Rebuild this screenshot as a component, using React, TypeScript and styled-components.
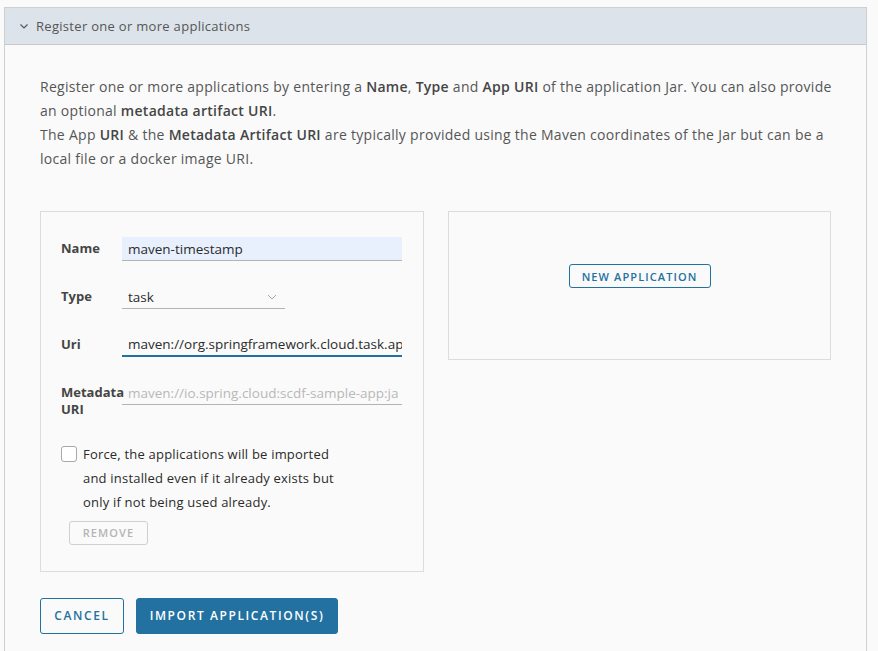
import React from "react";
import styled, { createGlobalStyle } from "styled-components";

const Global = createGlobalStyle`
  html, body { margin: 0; padding: 0; background: #fafafa; }
  body { font-family: "Open Sans", "Liberation Sans", sans-serif; color: #565656; }
  * { box-sizing: border-box; }
`;

const Page = styled.div`
  padding: 7px 11px 0 4px;
  height: 651px;
  overflow: hidden;
`;

const Panel = styled.section`
  border: 1px solid #cfcfcf;
  border-bottom: none;
  min-height: 700px;
  background: #fafafa;
`;

const Header = styled.div`
  height: 37px;
  background: #dce3ea;
  border-bottom: 1px solid #c8c8c8;
  display: flex;
  align-items: center;
  padding-left: 14px;
  gap: 7px;
  font-size: 13px;
  letter-spacing: 0.3px;
  color: #565656;
`;

const Body = styled.div`
  padding: 30px 35px 0 35px;
`;

const Intro = styled.p`
  margin: 0;
  font-size: 14px;
  line-height: 24px;
  color: #565656;
  letter-spacing: 0.28px;
  white-space: nowrap;
  b { font-weight: 600; color: #454545; }
`;

const Cards = styled.div`
  display: flex;
  gap: 24px;
  align-items: flex-start;
  margin-top: 40px;
`;

const Card = styled.div<{ $w: number }>`
  width: ${(p) => p.$w}px;
  border: 1px solid #dcdcdc;
  background: #fafafa;
`;

const FormCard = styled(Card)`
  padding: 25px 21px 26px 20px;
`;

const NewCard = styled(Card)`
  height: 149px;
  display: flex;
  justify-content: center;
  padding-top: 52px;
`;

const Row = styled.div`
  display: flex;
  align-items: flex-start;
  margin-bottom: 24px;
`;

const Label = styled.label`
  width: 61px;
  flex: none;
  font-size: 13px;
  font-weight: 700;
  color: #454545;
  line-height: 17px;
  padding-top: 3px;
`;

const Input = styled.div<{ $fill?: boolean; $focus?: boolean; $ph?: boolean; $w?: number }>`
  width: ${(p) => p.$w ?? 280}px;
  height: 24px;
  padding: 0 6px;
  display: flex;
  align-items: center;
  position: relative;
  font-size: 13.5px;
  white-space: nowrap;
  overflow: hidden;
  color: ${(p) => (p.$ph ? "#b8b8b8" : "#2b2b2b")};
  background: ${(p) => (p.$fill ? "#e8f0fe" : "transparent")};
  border-bottom: ${(p) => (p.$focus ? "2px solid #2271a1" : "1px solid #b3b3b3")};
`;

const SelectChevron = styled.svg`
  position: absolute;
  right: 8px;
  top: 9px;
`;

const CheckRow = styled.div`
  display: flex;
  gap: 6px;
  align-items: flex-start;
`;

const Box = styled.span`
  width: 16px;
  height: 16px;
  flex: none;
  margin-top: 4px;
  border: 1px solid #a8a8a8;
  border-radius: 3px;
  background: #fff;
`;

const CheckText = styled.span`
  width: 260px;
  font-size: 13px;
  line-height: 24px;
  letter-spacing: 0.2px;
  color: #2b2b2b;
`;

const Btn = styled.button<{
  $variant: "outline" | "solid" | "disabled";
  $h: number;
  $w: number;
  $fs: number;
  $ls: number;
}>`
  width: ${(p) => p.$w}px;
  height: ${(p) => p.$h}px;
  padding: 0;
  font-family: "Open Sans", "Liberation Sans", sans-serif;
  font-size: ${(p) => p.$fs}px;
  font-weight: 600;
  letter-spacing: ${(p) => p.$ls}px;
  text-transform: uppercase;
  border-radius: 3px;
  cursor: pointer;
  border: 1px solid
    ${(p) => (p.$variant === "disabled" ? "#cfcfcf" : "#2271a1")};
  color: ${(p) =>
    p.$variant === "solid" ? "#fff" : p.$variant === "disabled" ? "#b5b5b5" : "#2271a1"};
  background: ${(p) => (p.$variant === "solid" ? "#2271a1" : "transparent")};
`;

const RemoveWrap = styled.div`
  padding: 6px 0 0 8px;
`;

const Footer = styled.div`
  display: flex;
  gap: 12px;
  margin-top: 26px;
`;

export default function App() {
  return (
    <>
      <Global />
      <Page>
        <Panel>
          <Header>
            <svg width="10" height="10" viewBox="0 0 10 10">
              <path d="M1.5 3.5 L5 7 L8.5 3.5" fill="none" stroke="#565656" strokeWidth="1.2" />
            </svg>
            Register one or more applications
          </Header>
          <Body>
            <Intro>
              Register one or more applications by entering a <b>Name</b>, <b>Type</b> and <b>App URI</b> of the
              application Jar. You can also provide
              <br />
              an optional <b>metadata artifact URI</b>.
              <br />
              The App <b>URI</b> &amp; the <b>Metadata Artifact URI</b> are typically provided using the Maven
              coordinates of the Jar but can be a
              <br />
              local file or a docker image URI.
            </Intro>
            <Cards>
              <FormCard $w={385}>
                <Row>
                  <Label>Name</Label>
                  <Input $fill>maven-timestamp</Input>
                </Row>
                <Row>
                  <Label>Type</Label>
                  <Input $w={163}>
                    task
                    <SelectChevron width="10" height="6" viewBox="0 0 10 6">
                      <path d="M1 1 L5 5 L9 1" fill="none" stroke="#a8a8a8" strokeWidth="1" />
                    </SelectChevron>
                  </Input>
                </Row>
                <Row>
                  <Label>Uri</Label>
                  <Input $focus>maven://org.springframework.cloud.task.ap</Input>
                </Row>
                <Row>
                  <Label>Metadata URI</Label>
                  <Input $ph>maven://io.spring.cloud:scdf-sample-app:ja</Input>
                </Row>
                <CheckRow>
                  <Box />
                  <CheckText>
                    Force, the applications will be imported and installed even if it already exists but only if not
                    being used already.
                  </CheckText>
                </CheckRow>
                <RemoveWrap>
                  <Btn $variant="disabled" $w={79} $h={24} $fs={11} $ls={1.1}>
                    Remove
                  </Btn>
                </RemoveWrap>
              </FormCard>
              <NewCard $w={384}>
                <Btn $variant="outline" $w={142} $h={24} $fs={11} $ls={1.1}>
                  New Application
                </Btn>
              </NewCard>
            </Cards>
            <Footer>
              <Btn $variant="outline" $w={84} $h={36} $fs={12} $ls={1.6}>
                Cancel
              </Btn>
              <Btn $variant="solid" $w={202} $h={36} $fs={12} $ls={1.6}>
                Import Application(s)
              </Btn>
            </Footer>
          </Body>
        </Panel>
      </Page>
    </>
  );
}
